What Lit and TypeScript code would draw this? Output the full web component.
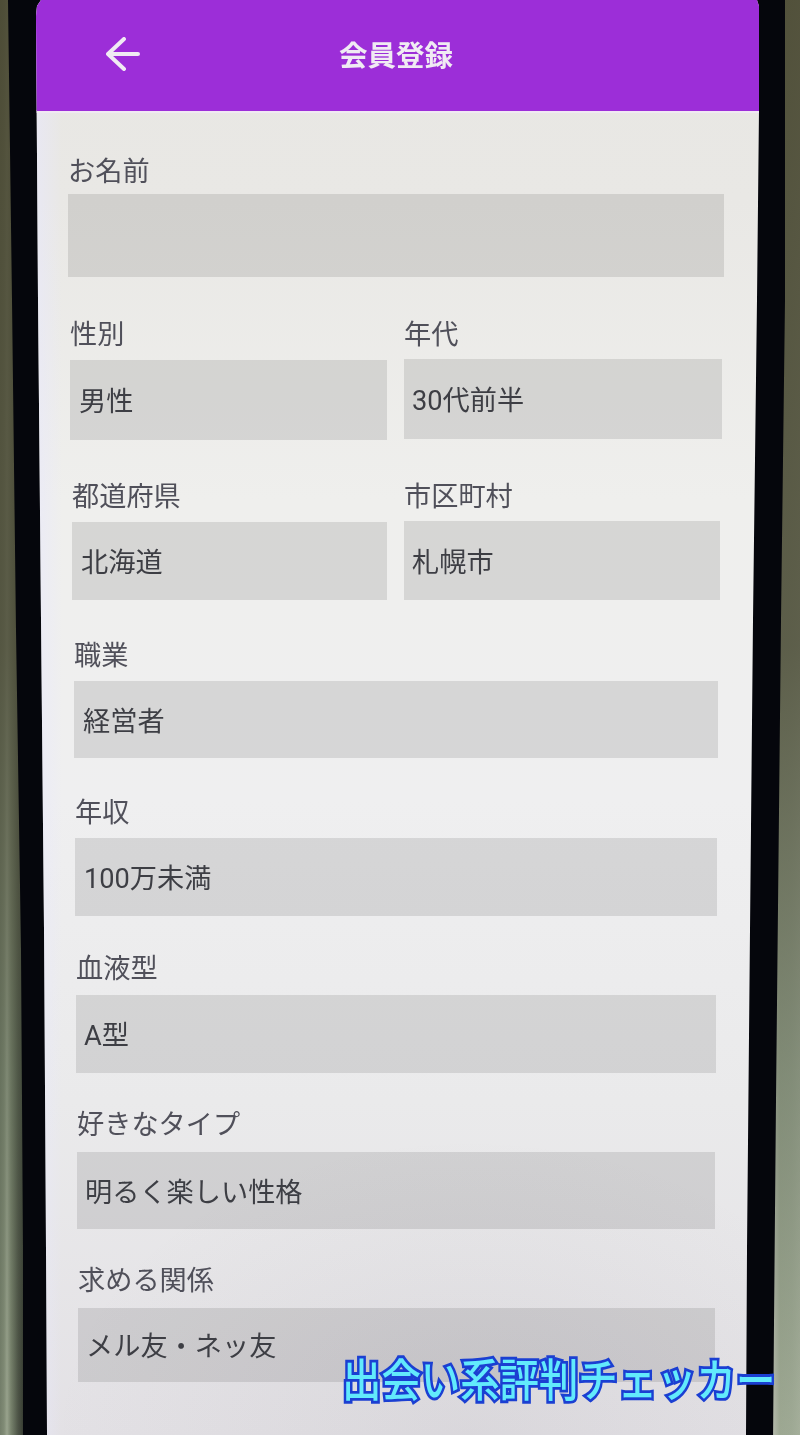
import { LitElement, html, css, svg } from "lit";
import { customElement } from "lit/decorators.js";

interface Cell { label: string; value: string; pad: number; fh: number; mb: number; }
interface Row { gap: number; left: number; right: number; cols: Cell[]; }

const c = (label: string, value: string, pad: number, fh: number, mb: number): Cell => ({ label, value, pad, fh, mb });

const ROWS: Row[] = [
  { gap: 39, left: 68, right: 76, cols: [c("お名前", "", 10, 83, 4)] },
  { gap: 36, left: 70, right: 78, cols: [c("性別", "男性", 9, 80, 7), c("年代", "30代前半", 8, 80, 6)] },
  { gap: 35, left: 72, right: 80, cols: [c("都道府県", "北海道", 9, 78, 7), c("市区町村", "札幌市", 8, 79, 6)] },
  { gap: 34, left: 74, right: 82, cols: [c("職業", "経営者", 9, 77, 7)] },
  { gap: 33, left: 75, right: 83, cols: [c("年収", "100万未満", 9, 78, 7)] },
  { gap: 31, left: 76, right: 84, cols: [c("血液型", "A型", 8, 78, 8)] },
  { gap: 30, left: 77, right: 85, cols: [c("好きなタイプ", "明るく楽しい性格", 8, 77, 9)] },
  { gap: 30, left: 78, right: 85, cols: [c("求める関係", "メル友・ネッ友", 8, 74, 9)] },
];

@customElement("app-root")
export class AppRoot extends LitElement {
  static styles = css`
    :host {
      display: block;
      position: relative;
      width: 800px;
      height: 1435px;
      overflow: hidden;
      font-family: Roboto, "Noto Sans CJK JP", "Noto Sans", sans-serif;
      background:
        linear-gradient(180deg, rgba(72, 70, 48, 0.9) 0, rgba(78, 78, 58, 0.85) 45%, rgba(84, 94, 74, 0.5) 75%, rgba(90, 100, 80, 0.2) 100%),
        linear-gradient(90deg, #7b8672 0, #8b9680 4px, #aab49e 7px, #7f8a74 11px, #4a5044 18px, #30342c 23px, #30342c 770px, #c8ccbf 774px, #aeb9a3 780px, #b0bba6 792px, #b8c2ae 800px);
    }
    :host::before {
      content: "";
      position: absolute;
      inset: 0;
      background: #05060c;
      clip-path: polygon(8px 0, 12px 300px, 16px 630px, 21px 950px, 23px 1250px, 23px 1435px, 773px 1435px, 776px 1100px, 781px 620px, 785px 300px, 785px 0);
    }
    .screen {
      position: relative;
      height: 1435px;
      background:
        radial-gradient(420px 300px at 470px 1435px, rgba(90, 85, 95, 0.07), rgba(90, 85, 95, 0)),
        linear-gradient(90deg, rgba(232, 232, 252, 0.55) 38px, rgba(232, 232, 252, 0) 62px),
        linear-gradient(180deg, #e8e7e3 0, #e9e8e5 200px, #efefed 500px, #efeff0 800px, #eaeaeb 1100px, #e3e1e5 1435px);
      clip-path: polygon(41px 0, 37px 6px, 36px 16px, 38px 300px, 41px 620px, 44px 930px, 46px 1250px, 47px 1435px, 746px 1435px, 747px 1250px, 750px 930px, 753px 620px, 757px 300px, 759px 110px, 759px 6px, 757px 0);
    }
    .bar {
      display: flex;
      align-items: center;
      height: 111px;
      padding: 0 0 3px 105px;
      box-sizing: border-box;
      background: #9c2ed8;
      box-shadow: 0 2px 0 #f1e9f3;
      color: #f0ebf3;
    }
    .bar svg { display: block; width: 36px; height: 36px; flex: none; filter: blur(0.4px); }
    .title {
      margin: 6px 0 0 198px;
      font-size: 28.5px;
      line-height: 40px;
      font-weight: 700;
      white-space: nowrap;
      filter: blur(0.5px);
    }
    .row { display: flex; gap: 17px; }
    .cell { flex: 1 1 0; min-width: 0; }
    .cell:first-child:not(:last-child) { flex: 0 0 calc(50% - 9px); }
    .label {
      height: 40px;
      line-height: 44px;
      font-size: 27.2px;
      color: #50505a;
      white-space: nowrap;
      filter: blur(0.45px);
    }
    .field {
      display: flex;
      align-items: center;
      background: rgba(0, 0, 0, 0.1);
      font-size: 27.2px;
      color: #3d3e44;
      white-space: nowrap;
    }
    .field span { padding-bottom: 2px; filter: blur(0.45px); }
    .mark {
      position: absolute;
      left: 342px;
      top: 1354px;
      font-size: 39.4px;
      line-height: 56px;
      font-weight: 500;
      white-space: nowrap;
      color: #62eafc;
      -webkit-text-stroke: 5px #1b3fd2;
      paint-order: stroke fill;
      stroke-linejoin: round;
      transform: scaleY(1.14);
    }
  `;

  private arrow() {
    return svg`<svg viewBox="0 0 36 36" fill="none" stroke="currentColor" stroke-width="4" stroke-linecap="round" stroke-linejoin="round" aria-hidden="true"><path d="M3 18H33M19 3L3 18L19 33"/></svg>`;
  }

  render() {
    return html`
      <div class="screen">
        <div class="bar">
          ${this.arrow()}
          <div class="title">会員登録</div>
        </div>
        ${ROWS.map(
          (r) => html`
            <div class="row" style="margin-top:${r.gap}px;padding-left:${r.left}px;padding-right:${r.right}px">
              ${r.cols.map(
                (k) => html`
                  <div class="cell">
                    <div class="label" style="margin-bottom:${k.mb}px">${k.label}</div>
                    <div class="field" style="height:${k.fh}px;padding-left:${k.pad}px"><span>${k.value}</span></div>
                  </div>
                `
              )}
            </div>
          `
        )}
      </div>
      <div class="mark">出会い系評判チェッカー</div>
    `;
  }
}
